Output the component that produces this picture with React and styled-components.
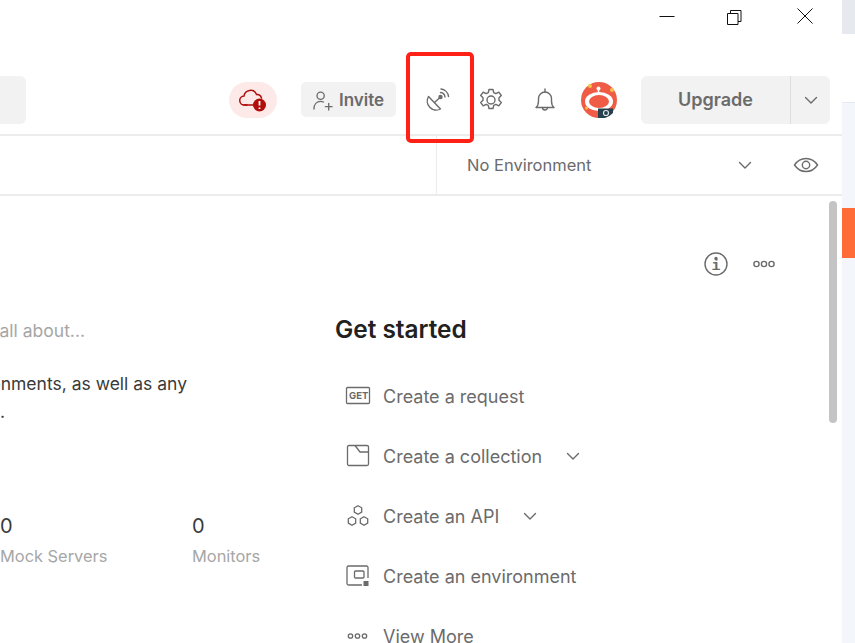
import React from "react";
import styled, { createGlobalStyle } from "styled-components";

const Global = createGlobalStyle`
  html, body { margin: 0; padding: 0; background: #fff; overflow: hidden; }
  * { box-sizing: border-box; }
  #root { width: 855px; height: 643px; }
`;

const Page = styled.div`
  position: relative;
  width: 855px;
  height: 643px;
  overflow: hidden;
  display: flex;
  font-family: Inter, "Liberation Sans", sans-serif;
  background: #fff;
`;
const Main = styled.div`
  width: 842px;
  flex: none;
  display: flex;
  flex-direction: column;
`;
const Rail = styled.div`
  flex: 1;
  display: flex;
  flex-direction: column;
`;
const RailTop = styled.div`
  height: 34px;
  background: #e6e9ed;
`;
const RailGap = styled.div`
  height: 68px;
  background: #fff;
`;
const RailBody = styled.div`
  flex: 1;
  background: #f3f6fb;
  border-top: 1px solid #e6e9ed;
  padding-top: 105px;
`;
const RailAccent = styled.div`
  height: 50px;
  background: #ff6c37;
`;
const TitleBar = styled.div`
  height: 34px;
  display: flex;
  justify-content: flex-end;
  align-items: center;
  padding: 0 26px 3px 0;
  gap: 47px;
`;
const WinButton = styled.svg`
  width: 22px;
  height: 22px;
  fill: none;
  stroke: #111;
  stroke-width: 1;
`;
const Toolbar = styled.div`
  height: 102px;
  border-bottom: 2px solid #ececec;
  display: flex;
  align-items: center;
  padding: 31px 12px 0 0;
`;
const SearchStub = styled.div`
  width: 26px;
  height: 48px;
  background: #f2f2f2;
  border-radius: 0 6px 6px 0;
  margin-right: 203px;
`;
const CloudPill = styled.div`
  width: 48px;
  height: 36px;
  border-radius: 18px;
  background: #fdeae8;
  display: flex;
  align-items: center;
  justify-content: center;
  margin-right: 24px;
`;
const Invite = styled.div`
  width: 95px;
  height: 35px;
  border-radius: 5px;
  background: #f2f2f2;
  color: #6b6b6b;
  font-weight: 600;
  font-size: 17px;
  display: flex;
  align-items: center;
  justify-content: center;
  gap: 6px;
`;
const IconSlot = styled.div`
  width: 54px;
  height: 36px;
  display: flex;
  align-items: center;
  justify-content: center;
  margin-left: ${(p) => p.$offset || 0}px;
`;
const ToolIcon = styled.svg`
  width: 26px;
  height: 26px;
  fill: none;
  stroke: #6b6b6b;
  stroke-width: 1.4;
  stroke-linecap: round;
  stroke-linejoin: round;
`;
const InviteIcon = styled(ToolIcon)`
  width: 20px;
  height: 22px;
`;
const Upgrade = styled.div`
  margin-left: 15px;
  width: 189px;
  height: 48px;
  border-radius: 6px;
  background: #f2f2f2;
  display: flex;
`;
const UpgradeLabel = styled.div`
  width: 150px;
  display: flex;
  align-items: center;
  justify-content: center;
  color: #6b6b6b;
  font-weight: 600;
  font-size: 18px;
  border-right: 1px solid #dedede;
`;
const UpgradeCaret = styled.div`
  flex: 1;
  display: flex;
  align-items: center;
  justify-content: center;
`;
const Caret = styled.svg`
  width: ${(p) => p.$size || 16}px;
  height: ${(p) => p.$size || 16}px;
  fill: none;
  stroke: #6b6b6b;
  stroke-width: 1.4;
  stroke-linecap: round;
  stroke-linejoin: round;
`;
const EnvBar = styled.div`
  height: 60px;
  border-bottom: 2px solid #ececec;
  display: flex;
  justify-content: flex-end;
`;
const EnvSelect = styled.div`
  width: 406px;
  border-left: 1px solid #ececec;
  display: flex;
  align-items: center;
  padding-left: 30px;
  color: #6b6b6b;
  font-size: 16.5px;
`;
const EnvName = styled.span`
  width: 270px;
`;
const EyeSlot = styled.svg`
  width: 26px;
  height: 26px;
  margin-left: 40px;
  fill: none;
  stroke: #6b6b6b;
  stroke-width: 1.4;
`;
const Body = styled.div`
  flex: 1;
  position: relative;
  display: flex;
  overflow: hidden;
`;
const LeftCol = styled.div`
  width: 335px;
  flex: none;
  overflow: hidden;
  padding-top: 123px;
`;
const Clip = styled.div`
  margin-left: -300px;
  width: 520px;
`;
const Summary = styled.div`
  color: #a6a6a6;
  font-size: 17.5px;
  line-height: 24px;
  text-align: right;
  width: 385px;
`;
const Description = styled.div`
  margin-top: 27px;
  color: #3a3a3a;
  font-size: 17.5px;
  line-height: 27.5px;
  width: 487px;
  text-align: right;
`;
const DescriptionEnd = styled.div`
  color: #3a3a3a;
  font-size: 17.5px;
  line-height: 27.5px;
  margin-left: 300px;
`;
const Stats = styled.div`
  margin-top: 88px;
  margin-left: 300px;
  display: grid;
  grid-template-columns: 192px 100px;
`;
const Stat = styled.div`
  display: flex;
  flex-direction: column;
  gap: 5px;
`;
const StatValue = styled.div`
  color: #3a3a3a;
  font-size: 20px;
  line-height: 26px;
`;
const StatLabel = styled.div`
  color: #a6a6a6;
  font-size: 16.4px;
  line-height: 24px;
  white-space: nowrap;
  overflow: hidden;
`;
const RightCol = styled.div`
  flex: 1;
  padding-top: 118px;
  position: relative;
`;
const Heading = styled.div`
  color: #212121;
  font-size: 24.4px;
  font-weight: 600;
  line-height: 30px;
  margin-bottom: 22px;
`;
const Row = styled.div`
  height: 60px;
  display: flex;
  align-items: center;
  color: #6b6b6b;
  font-size: 18px;
`;
const RowIcon = styled.svg`
  width: 26px;
  height: 26px;
  margin-left: 10px;
  margin-right: 12px;
  fill: none;
  stroke: #6b6b6b;
  stroke-width: 1.3;
  flex: none;
`;
const RowCaret = styled(Caret)`
  margin-left: 23px;
`;
const Actions = styled.div`
  position: absolute;
  top: 55px;
  right: 65px;
  display: flex;
  align-items: center;
  gap: 22px;
`;
const ScrollThumb = styled.div`
  position: absolute;
  top: 5px;
  right: 5px;
  width: 8px;
  height: 222px;
  border-radius: 4px;
  background: #c4c4c4;
`;
const Highlight = styled.div`
  position: absolute;
  left: 406px;
  top: 52px;
  width: 68px;
  height: 91px;
  border: 4px solid #ff2116;
  border-radius: 5px;
`;
const GetTag = styled.text`
  font-family: Inter, "Liberation Sans", sans-serif;
  font-size: 9.5px;
  font-weight: 700;
  fill: #6b6b6b;
  stroke: none;
`;
const InfoI = styled.text`
  font-family: "Liberation Mono", monospace;
  font-size: 15px;
  font-weight: 700;
  fill: #6b6b6b;
  stroke: none;
`;

const Chevron = ({ size }) => (
  <Caret $size={size} viewBox="0 0 16 16">
    <path d="M2.5 5.5 8 11l5.5-5.5" />
  </Caret>
);

const Dots = () => (
  <ToolIcon viewBox="0 0 26 26">
    <circle cx="5.5" cy="13" r="2.6" />
    <circle cx="13" cy="13" r="2.6" />
    <circle cx="20.5" cy="13" r="2.6" />
  </ToolIcon>
);

export default function App() {
  return (
    <Page>
      <Global />
      <Main>
        <TitleBar>
          <WinButton viewBox="0 0 22 22"><path d="M3.5 11.5h15" /></WinButton>
          <WinButton viewBox="1 0 22 22">
            <path d="M3.500 8.500h10.500v11H3.500z" />
            <path d="M6.500 8.500V5.500h10.500v11h-3" />
          </WinButton>
          <WinButton viewBox="0 0 22 22"><path d="M3.500 3.500l15 15M18.500 3.500l-15 15" /></WinButton>
        </TitleBar>
        <Toolbar>
          <SearchStub />
          <CloudPill>
            <svg width="30" height="26" viewBox="0 0 30 26" fill="none">
              <path d="M9 18H6.500a4.500 4.500 0 0 1-.5-9 6.500 6.500 0 0 1 12.500-1.500A4.800 4.800 0 0 1 23.500 11" stroke="#b00d0d" strokeWidth="1.5" strokeLinecap="round" />
              <path d="M6 18h10" stroke="#b00d0d" strokeWidth="1.5" strokeLinecap="round" />
              <circle cx="21.500" cy="18" r="6.500" fill="#b00d0d" />
              <path d="M21.500 14v4.500M21.500 20.500v1.500" stroke="#fff" strokeWidth="1.800" />
            </svg>
          </CloudPill>
          <Invite>
            <InviteIcon viewBox="3 1 21 23">
              <circle cx="11" cy="8" r="3.800" />
              <path d="M4 22c0-5 3-8 7-8 1 0 2 .2 3 .6M16 19.500h7M19.500 16v7" />
            </InviteIcon>
            Invite
          </Invite>
          <IconSlot $offset={14}>
            <ToolIcon viewBox="0 0 26 26">
              <path d="M4.500 9.500a9 9 0 0 0 12 12.500z" />
              <path d="M10.500 15.500l5.500-5" />
              <circle cx="16.500" cy="10" r="1.500" fill="#6b6b6b" />
              <path d="M16.500 5.500a5 5 0 0 1 4.500 4.500M17 2a8.500 8.500 0 0 1 7.500 7.500" />
            </ToolIcon>
          </IconSlot>
          <IconSlot>
            <ToolIcon viewBox="0 0 26 26">
              <path d="M11 2.500h4l.7 3.200 2.200 1 2.900-1.500 2.500 3.300-2.300 2.300v2.400l2.300 2.300-2.500 3.300-2.900-1.500-2.200 1-.7 3.200h-4l-.7-3.200-2.200-1-2.900 1.500-2.500-3.300 2.300-2.300v-2.400L2.700 8.500l2.500-3.300 2.900 1.500 2.200-1z" />
              <circle cx="13" cy="13" r="4" />
            </ToolIcon>
          </IconSlot>
          <IconSlot>
            <ToolIcon viewBox="0 0 26 26">
              <path d="M4 20.500c2-1.500 2.500-3 2.500-6.500v-2.500a6.500 6.500 0 0 1 13 0V14c0 3.500.5 5 2.500 6.500z" />
              <path d="M13 2v3M10.500 20.500a2.500 2.500 0 0 0 5 0" />
            </ToolIcon>
          </IconSlot>
          <IconSlot>
            <svg width="36" height="36" viewBox="0 0 36 36">
              <circle cx="18" cy="18" r="18" fill="#ef5b45" />
              <circle cx="9" cy="4" r="2" fill="#f6c344" />
              <circle cx="31" cy="8" r="2" fill="#f6c344" />
              <circle cx="5.500" cy="26" r="1.500" fill="#f6c344" />
              <ellipse cx="18" cy="19.500" rx="14" ry="9.500" fill="#fff" />
              <ellipse cx="18" cy="19.500" rx="10" ry="6.500" fill="#ef5b45" />
              <circle cx="17.500" cy="6.500" r="2" fill="#fff" />
              <path d="M17.500 7v4" stroke="#fff" strokeWidth="1.500" />
              <path d="M17 36V26.500h15V31a18 18 0 0 1-8 5z" fill="#26404d" />
              <circle cx="25" cy="31" r="2.500" fill="none" stroke="#dfe5e8" strokeWidth="1.200" />
            </svg>
          </IconSlot>
          <Upgrade>
            <UpgradeLabel>Upgrade</UpgradeLabel>
            <UpgradeCaret><Chevron /></UpgradeCaret>
          </Upgrade>
        </Toolbar>
        <EnvBar>
          <EnvSelect>
            <EnvName>No Environment</EnvName>
            <Chevron />
            <EyeSlot viewBox="0 0 26 26">
              <path d="M1.500 13C4.500 8.500 8.500 6.500 13 6.500s8.500 2 11.500 6.500c-3 4.500-7 6.500-11.500 6.500S4.500 17.500 1.500 13z" />
              <circle cx="13" cy="13" r="3.700" />
            </EyeSlot>
          </EnvSelect>
        </EnvBar>
        <Body>
          <LeftCol>
            <Clip>
              <Summary>Tell us what this workspace is all about...</Summary>
              <Description>and environments, as well as any</Description>
              <DescriptionEnd>.</DescriptionEnd>
              <Stats>
                <Stat>
                  <StatValue>0</StatValue>
                  <StatLabel>Mock Servers</StatLabel>
                </Stat>
                <Stat>
                  <StatValue>0</StatValue>
                  <StatLabel>Monitors</StatLabel>
                </Stat>
              </Stats>
            </Clip>
          </LeftCol>
          <RightCol>
            <Heading>Get started</Heading>
            <Row>
              <RowIcon viewBox="0 0 26 26">
                <rect x="1.500" y="4.500" width="23" height="16" rx="1" />
                <GetTag x="4" y="16">GET</GetTag>
              </RowIcon>
              Create a request
            </Row>
            <Row>
              <RowIcon viewBox="0 0 26 26">
                <rect x="2.500" y="2.500" width="21" height="20" rx="1.500" />
                <path d="M10 2.500L15 9h8.500" />
              </RowIcon>
              Create a collection
              <RowCaret $size={16} viewBox="0 0 16 16"><path d="M2.500 5.500 8 11l5.500-5.500" /></RowCaret>
            </Row>
            <Row>
              <RowIcon viewBox="0 0 26 26">
                <path d="M13 2.700l3.700 2.100v4.300L13 11.200l-3.700-2.100V4.800zM7 13.700l3.700 2.100v4.300L7 22.200l-3.700-2.100v-4.300zM19 13.700l3.700 2.100v4.300L19 22.200l-3.700-2.100v-4.300z" />
              </RowIcon>
              Create an API
              <RowCaret $size={16} viewBox="0 0 16 16"><path d="M2.500 5.500 8 11l5.500-5.500" /></RowCaret>
            </Row>
            <Row>
              <RowIcon viewBox="0 0 26 26">
                <path d="M23 15V4.500A1.500 1.500 0 0 0 21.500 3h-18A1.500 1.500 0 0 0 2 4.500v16A1.500 1.500 0 0 0 3.500 22H17" />
                <rect x="9.500" y="8" width="9.500" height="7" rx="1" />
                <rect x="18.500" y="18" width="5" height="5" fill="#6b6b6b" stroke="none" />
              </RowIcon>
              Create an environment
            </Row>
            <Row>
              <RowIcon viewBox="0 0 26 26">
                <circle cx="5.500" cy="13" r="2.200" />
                <circle cx="12.500" cy="13" r="2.200" />
                <circle cx="19.500" cy="13" r="2.200" />
              </RowIcon>
              View More
            </Row>
            <Actions>
              <ToolIcon viewBox="0 0 26 26">
                <circle cx="13" cy="13" r="11" />
                <circle cx="13" cy="7.500" r="1" fill="#6b6b6b" />
                <InfoI x="8.500" y="18.500">i</InfoI>
              </ToolIcon>
              <Dots />
            </Actions>
          </RightCol>
          <ScrollThumb />
        </Body>
      </Main>
      <Rail>
        <RailTop />
        <RailGap />
        <RailBody><RailAccent /></RailBody>
      </Rail>
      <Highlight />
    </Page>
  );
}
